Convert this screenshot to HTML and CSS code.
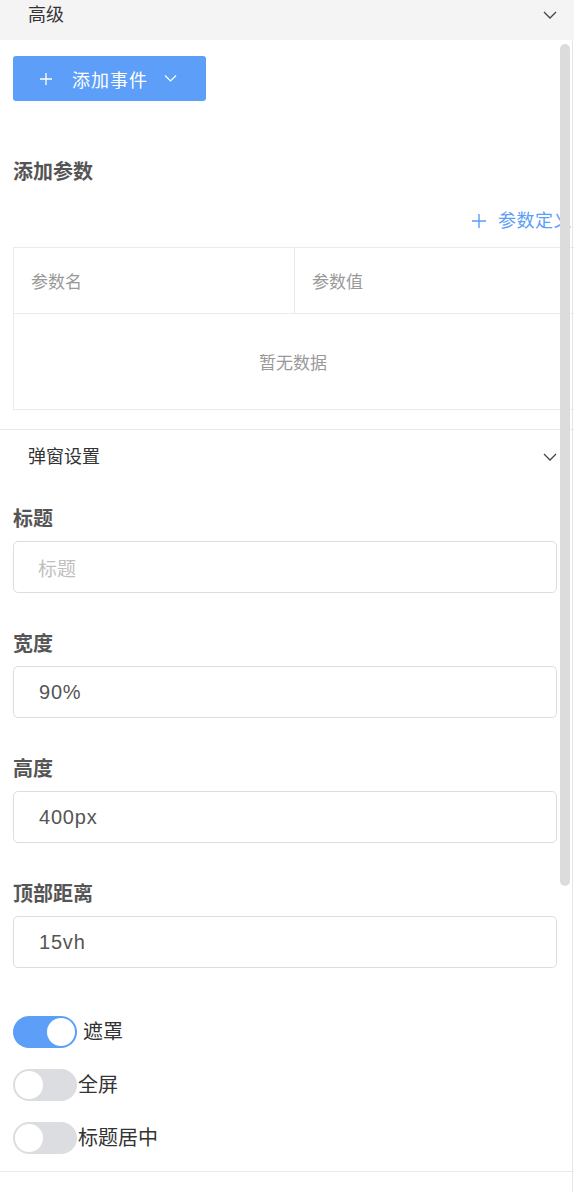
FILE: index.html
```html
<!DOCTYPE html>
<html lang="zh">
<head>
<meta charset="utf-8">
<link rel="stylesheet" href="styles.css">
</head>
<body>
<div class="panel">
  <div class="collapse-head top">
    <span class="collapse-title">高级</span>
    <svg class="chev" width="14" height="8" viewBox="0 0 14 8"><path d="M1 1 L7 7 L13 1" fill="none" stroke="#444" stroke-width="1.3"/></svg>
  </div>
  <div class="section">
    <button class="btn-primary">
      <svg width="12" height="12" viewBox="0 0 12 12"><path d="M6 0 V12 M0 6 H12" stroke="#fff" stroke-width="1.3"/></svg>
      <span class="btn-text">添加事件</span>
      <svg width="13" height="7" viewBox="0 0 13 7"><path d="M1 0.5 L6.5 6 L12 0.5" fill="none" stroke="#fff" stroke-width="1.2"/></svg>
    </button>
    <div class="sub-title">添加参数</div>
    <div class="link-row">
      <span class="link">
        <svg width="14" height="14" viewBox="0 0 14 14"><path d="M7 0 V14 M0 7 H14" stroke="#5b9ef8" stroke-width="1.4"/></svg>
        <span>参数定义</span>
      </span>
    </div>
    <div class="table">
      <div class="thead">
        <div class="th">参数名</div>
        <div class="th th-last">参数值</div>
      </div>
      <div class="empty">暂无数据</div>
    </div>
  </div>
  <div class="collapse-head second">
    <span class="collapse-title">弹窗设置</span>
    <svg class="chev" width="14" height="8" viewBox="0 0 14 8"><path d="M1 1 L7 7 L13 1" fill="none" stroke="#444" stroke-width="1.3"/></svg>
  </div>
  <div class="section form">
    <div class="field">
      <div class="label">标题</div>
      <div class="input placeholder">标题</div>
    </div>
    <div class="field">
      <div class="label">宽度</div>
      <div class="input">90%</div>
    </div>
    <div class="field">
      <div class="label">高度</div>
      <div class="input">400px</div>
    </div>
    <div class="field">
      <div class="label">顶部距离</div>
      <div class="input">15vh</div>
    </div>
    <div class="switches">
      <div class="switch-row">
        <span class="switch on"><span class="knob"></span></span>
        <span class="switch-label gap">遮罩</span>
      </div>
      <div class="switch-row">
        <span class="switch"><span class="knob"></span></span>
        <span class="switch-label">全屏</span>
      </div>
      <div class="switch-row">
        <span class="switch"><span class="knob"></span></span>
        <span class="switch-label">标题居中</span>
      </div>
    </div>
  </div>
  <div class="bottom-line"></div>
  <div class="scrollbar"></div>
  <div class="track-line"></div>
</div>
</body>
</html>
```

FILE: styles.css
```css
* { box-sizing: border-box; }
html, body { margin: 0; padding: 0; background: #fff; }
body {
  font-family: "Liberation Sans", "Noto Sans CJK SC", sans-serif;
  color: #333;
}
.panel {
  position: relative;
  width: 574px;
  height: 1192px;
  overflow: hidden;
}
.collapse-head {
  display: flex;
  align-items: center;
  justify-content: space-between;
  padding: 0 17px 0 28px;
}
.collapse-head.top {
  height: 40px;
  background: #f4f4f4;
  align-items: flex-start;
  padding-top: 1px;
}
.collapse-head.top .collapse-title { line-height: 28px; }
.collapse-head.top .chev { margin-top: 10px; }
.collapse-title {
  font-size: 18px;
  color: #333;
  line-height: 28px;
}
.section { padding-left: 13px; }
.section:first-of-type { padding-top: 16px; }
.btn-primary {
  display: flex;
  align-items: center;
  width: 193px;
  height: 45px;
  padding: 0 0 0 27px;
  background: #5c9ef8;
  border: none;
  border-radius: 3px;
  font-family: inherit;
  margin: 16px 0 0 0;
}
.btn-text {
  color: #fff;
  font-size: 18px;
  margin: 0 16px 0 20px;
  letter-spacing: 1px;
}
.sub-title {
  margin-top: 56px;
  font-size: 20px;
  line-height: 30px;
  font-weight: 600;
  color: #555;
}
.link-row {
  display: flex;
  justify-content: flex-end;
  margin-top: 22px;
  padding-right: 2px;
}
.link {
  display: flex;
  align-items: center;
  gap: 12px;
  color: #5b9ef8;
  font-size: 18px;
  line-height: 24px;
  letter-spacing: 0.5px;
}
.table {
  margin-top: 14px;
  border-top: 1px solid #ebebeb;
  border-left: 1px solid #ebebeb;
  border-bottom: 1px solid #ebebeb;
}
.thead {
  display: flex;
  height: 66px;
  border-bottom: 1px solid #ebebeb;
}
.th {
  width: 281px;
  display: flex;
  align-items: center;
  padding-left: 17px;
  font-size: 17px;
  color: #999;
  border-right: 1px solid #ebebeb;
}
.th-last { flex: 1; border-right: none; }
.empty {
  height: 95px;
  display: flex;
  align-items: center;
  justify-content: center;
  padding-right: 2px;
  font-size: 17px;
  color: #999;
}
.collapse-head.second {
  margin-top: 19px;
  border-top: 1px solid #ebebeb;
  height: 54px;
}
.form { padding-right: 17px; }
.field { margin-top: 21px; }
.field + .field { margin-top: 36px; }
.label {
  font-size: 20px;
  line-height: 30px;
  font-weight: 600;
  color: #555;
}
.input {
  margin-top: 7px;
  height: 52px;
  border: 1px solid #dcdde3;
  border-radius: 5px;
  display: flex;
  align-items: center;
  padding-left: 25px;
  font-size: 20px;
  letter-spacing: 0.8px;
  color: #555;
}
.input.placeholder { color: #bfbfbf; font-size: 19px; padding-left: 24px; letter-spacing: 0; }
.switches {
  margin-top: 48px;
  display: flex;
  flex-direction: column;
  gap: 21px;
}
.switch-row {
  display: flex;
  align-items: center;
  height: 32px;
}
.switch {
  position: relative;
  width: 64px;
  height: 32px;
  border-radius: 16px;
  background: #dcdde1;
  flex: none;
}
.switch .knob {
  position: absolute;
  top: 2px;
  left: 2px;
  width: 28px;
  height: 28px;
  border-radius: 50%;
  background: #fff;
}
.switch.on { background: #5c9ef8; }
.switch.on .knob { left: 34px; }
.switch-label {
  font-size: 20px;
  line-height: 28px;
  color: #333;
  margin-left: 1px;
}
.switch-label.gap { margin-left: 6px; }
.bottom-line {
  margin-top: 17px;
  border-top: 1px solid #ebebeb;
}
.scrollbar {
  position: absolute;
  left: 560px;
  top: 44px;
  width: 10px;
  height: 842px;
  border-radius: 5px;
  background: #dcdcdc;
}
.track-line {
  position: absolute;
  left: 572px;
  top: 40px;
  width: 1px;
  bottom: 0;
  background: #e6e6e6;
}
```
